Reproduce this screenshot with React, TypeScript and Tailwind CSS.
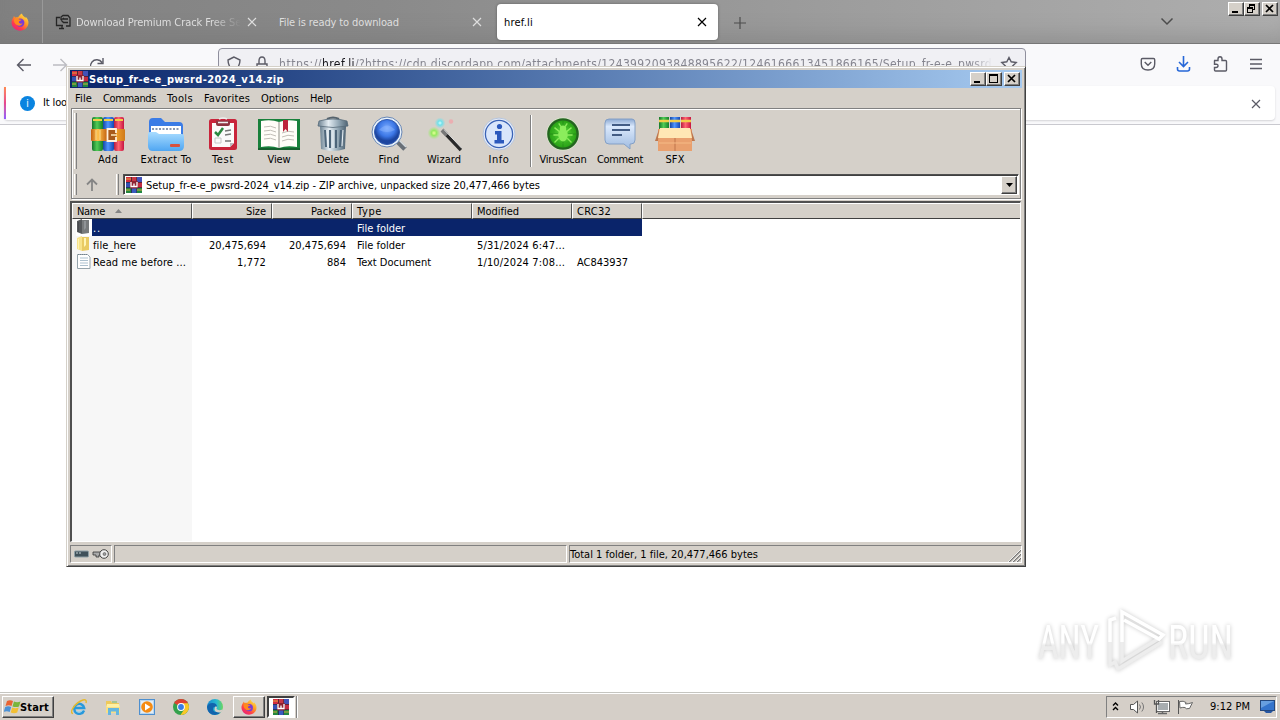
import { useLayoutEffect, useRef, type ReactNode } from "react";

/** Text run spread to an exact advance width, as hinted bitmap text is. */
function T({ w, children, className = "", flat }: { w: number; children: string; className?: string; flat?: boolean }) {
  const ref = useRef<HTMLSpanElement>(null);
  useLayoutEffect(() => {
    const el = ref.current;
    if (!el) return;
    el.style.letterSpacing = "0px";
    const natural = el.getBoundingClientRect().width;
    el.style.letterSpacing = `${(w - natural) / children.length}px`;
  }, [w, children]);
  return (
    <span ref={ref} className={`inline-block shrink-0 whitespace-pre ${flat ? "" : "translate-y-px"} ${className}`}>
      {children}
    </span>
  );
}

const raised =
  "border border-t-white border-l-white border-r-[#404040] border-b-[#404040] shadow-[inset_-1px_-1px_0_#808080] bg-[#d5d0c9]";
const sunken = "border border-t-[#808080] border-l-[#808080] border-r-white border-b-white";

function WinButton({ kind, className = "" }: { kind: "min" | "max" | "restore" | "close"; className?: string }) {
  return (
    <button className={`h-[14px] w-4 shrink-0 ${raised} ${className}`}>
      <svg width="14" height="12" viewBox="0 0 14 12" fill="none" stroke="#000" shapeRendering="crispEdges">
        {kind === "min" && <path d="M3 9h6" strokeWidth="2" />}
        {kind === "max" && (
          <>
            <path d="M2.5 1.5h8v8h-8z" />
            <path d="M2 2h9" strokeWidth="2" />
          </>
        )}
        {kind === "restore" && (
          <>
            <path d="M4.5 4V1.5h5v5H8M2.5 4.5h5v5h-5z" />
            <path d="M4 2h6M2 5h6" strokeWidth="2" />
          </>
        )}
        {kind === "close" && <path d="M3 2l7 7M10 2l-7 7" strokeWidth="1.7" shapeRendering="auto" />}
      </svg>
    </button>
  );
}

function RarLogo({ size = 16 }: { size?: number }) {
  return (
    <svg width={size} height={size} viewBox="0 0 16 16" className="shrink-0">
      <rect width="16" height="16" fill="#24202c" />
      <rect x="0" y="0" width="5" height="5" fill="#d32b3f" />
      <rect x="5.7" y="0" width="4.8" height="5" fill="#c73646" />
      <rect x="11" y="0" width="5" height="5" fill="#4252b8" />
      <rect x="0" y="5.6" width="5" height="4.8" fill="#3450b4" />
      <rect x="11" y="5.6" width="5" height="4.8" fill="#c22c42" />
      <rect x="0" y="11" width="5" height="5" fill="#23863d" />
      <rect x="5.7" y="11" width="4.8" height="5" fill="#385bc0" />
      <rect x="11" y="11" width="5" height="5" fill="#218843" />
      <path d="M0 2h5M11 13h5M0 13h4" stroke="#e4b53f" strokeWidth=".9" />
      <rect x="4" y="4" width="8" height="7.500" rx="1" fill="#8d2432" />
      <path d="M5 5v4.500h6V5M8 6.500v3" fill="none" stroke="#fff" strokeWidth="1.300" />
    </svg>
  );
}

function Firefox({ size = 16 }: { size?: number }) {
  return (
    <svg width={size} height={size} viewBox="0 0 20 20" className="shrink-0">
      <defs>
        <linearGradient id="ff" x1=".85" y1=".05" x2=".2" y2=".95">
          <stop offset="0" stopColor="#ffe34a" />
          <stop offset=".4" stopColor="#ff9b24" />
          <stop offset=".75" stopColor="#ff3b4b" />
          <stop offset="1" stopColor="#e5247e" />
        </linearGradient>
      </defs>
      <path
        d="M12.2.5c.4 1.800 1.200 2.500 2.300 3.500.7.5 1.200 1.100 1.500 1.700l.2-1.600c2.100 1.800 3.300 4.300 3.200 7C19.200 16 15 19.600 10 19.600S.6 15.700.6 10.600c0-2.600 1.200-4.600 2.200-5.800L3.200 3.200l1.500 1.900c1-.5 2.200-.6 3.200-.4C8.800 3.200 10.200 1.400 12.200.5z"
        fill="url(#ff)"
      />
      <circle cx="10.300" cy="10.800" r="4.600" fill="#7a3bd6" />
      <path d="M3.600 6.500c2-1.300 4-.8 5.500.7l2.600.3c-.4 1.300-2.500 1.200-3 2.300-.3 1.800 2.200 2.600 4.100 1.600-.9 2.400-3.600 3.400-6 2.200-3-1.500-4-4.200-3.200-7.100z" fill="#ff8a1e" />
    </svg>
  );
}

function AddIcon() {
  return (
    <svg width="36" height="34" viewBox="0 0 36 34">
      <defs>
        <linearGradient id="ag"><stop offset="0" stopColor="#15762b" /><stop offset=".45" stopColor="#52cc56" /><stop offset="1" stopColor="#14802b" /></linearGradient>
        <linearGradient id="ab"><stop offset="0" stopColor="#1547a5" /><stop offset=".45" stopColor="#4e95ff" /><stop offset="1" stopColor="#1548b2" /></linearGradient>
        <linearGradient id="ar"><stop offset="0" stopColor="#b91c42" /><stop offset=".45" stopColor="#ff6571" /><stop offset="1" stopColor="#c61542" /></linearGradient>
        <linearGradient id="ao"><stop offset="0" stopColor="#c4610f" /><stop offset=".2" stopColor="#ffc34e" /><stop offset=".45" stopColor="#c96a15" /><stop offset=".7" stopColor="#f6a42e" /><stop offset="1" stopColor="#cf7a1a" /></linearGradient>
      </defs>
      <rect x="2" y="0" width="11" height="34" rx="2" fill="url(#ag)" />
      <rect x="13" y="0" width="11" height="34" rx="2" fill="url(#ab)" />
      <rect x="24" y="0" width="10" height="34" rx="2" fill="url(#ar)" />
      <path d="M3 3h9M14 3h9M25 3h8" stroke="#f2ce49" strokeWidth="2" />
      <rect x="1" y="12" width="34" height="12" rx="1" fill="url(#ao)" />
      <path d="M6 13v10M10 13v10" stroke="#fff2b0" strokeWidth="1" opacity=".7" />
      <rect x="18" y="12.500" width="8" height="11" fill="#a85a1c" />
      <path d="M26 16v-4h-8.500v12H26v-4" fill="none" stroke="#fff1dc" strokeWidth="1.800" />
      <path d="M21 18h6" stroke="#f8e1b5" strokeWidth="1.600" />
    </svg>
  );
}

function ExtractIcon() {
  return (
    <svg width="38" height="34" viewBox="0 0 38 34">
      <defs>
        <linearGradient id="ex" x2="0" y2="1"><stop offset="0" stopColor="#a9dcff" /><stop offset="1" stopColor="#4fa6f2" /></linearGradient>
      </defs>
      <path d="M2 5q0-4 4-4h8l4 4h14q4 0 4 4v16H2z" fill="#3b7ce6" />
      <path d="M4 9h30v12H4z" fill="#fff" />
      <path d="M5 12h28" stroke="#8797b3" strokeWidth="2" strokeDasharray="2 1.500" />
      <path d="M1 17q0-2 2-2h6l3 2h23q2 0 2 2v10q0 5-5 5H6q-5 0-5-5z" fill="url(#ex)" />
      <rect x="23" y="27" width="10" height="3" rx="1" fill="#d8513f" />
    </svg>
  );
}

function TestIcon() {
  return (
    <svg width="30" height="34" viewBox="0 0 30 34">
      <rect x="1" y="2" width="28" height="31" rx="2.500" fill="#c9243b" />
      <path d="M4 6h22v20l-4 4H4z" fill="#fbfafa" />
      <path d="M22 30v-4h4z" fill="#b9b9c0" />
      <path d="M8 3.500h14V7q0 2-2 2H10q-2 0-2-2z" fill="#8e3440" />
      <path d="M10 5.500h10M11 2q4-2 8 0" stroke="#eee" strokeWidth="1.500" fill="none" />
      <path d="M7 15l3 3 5-7" fill="none" stroke="#2c8740" strokeWidth="2.500" />
      <path d="M17 14l6-1M17 18l6-1M17 24h6" stroke="#777" strokeWidth="1.300" />
      <path d="M7 21h6v5H7z" fill="none" stroke="#c6c6c6" />
    </svg>
  );
}

function ViewIcon() {
  return (
    <svg width="44" height="34" viewBox="0 0 44 34">
      <path d="M1 2h42v31H1z" fill="#18803b" />
      <path d="M4 4q10-2 18 1 8-3 18-1v26q-10-2-18 1-8-3-18-1z" fill="#fffdf8" />
      <path d="M22 5v26" stroke="#b5b3ad" strokeWidth="1.500" />
      <path d="M7 10q7-2 12 1M7 14q7-2 12 1M7 18q7-2 12 1M7 22q7-2 12 1M25 16q6-3 12-1M25 20q6-3 12-1M25 24q6-3 12-1" stroke="#c2beb7" fill="none" />
      <path d="M26 3h5v12l-2.500-3L26 15z" fill="#bd243a" />
      <path d="M1 32h42" stroke="#155f2d" strokeWidth="2" />
    </svg>
  );
}

function DeleteIcon() {
  return (
    <svg width="32" height="36" viewBox="0 0 32 36">
      <defs>
        <linearGradient id="dl"><stop offset="0" stopColor="#6b8191" /><stop offset=".35" stopColor="#e4edf3" /><stop offset=".7" stopColor="#90a5b3" /><stop offset="1" stopColor="#4e6272" /></linearGradient>
      </defs>
      <path d="M10 3q6-3 12 0" stroke="#56636d" strokeWidth="2" fill="none" />
      <path d="M3 10h26l-1 23q-12 4-24 0z" fill="url(#dl)" />
      <path d="M8 14l1 17M13 14v18M19 14v18M24 14l-1 17" stroke="#4d657a" strokeWidth="2" />
      <path d="M10 14l1 17M16 14v18M26 14l-1 16" stroke="#edf4fa" />
      <path d="M2 5q14-4 28 0l1 5q-15 3-30 0z" fill="url(#dl)" stroke="#566978" strokeWidth=".8" />
    </svg>
  );
}

function FindIcon() {
  return (
    <svg width="36" height="36" viewBox="0 0 36 36">
      <defs>
        <radialGradient id="fi" cy=".35"><stop offset="0" stopColor="#7cadff" /><stop offset=".65" stopColor="#3c77e6" /><stop offset="1" stopColor="#1c459f" /></radialGradient>
      </defs>
      <path d="M26 25l8 8" stroke="#686f77" strokeWidth="5" />
      <path d="M27 23l8 8" stroke="#d4dadd" strokeWidth="1.500" />
      <circle cx="16" cy="16" r="15" fill="#e9f2fb" stroke="#6886b4" />
      <circle cx="16" cy="16" r="12.500" fill="url(#fi)" stroke="#315aae" />
      <path d="M8 14q8-9 16 0-8 4-16 0" fill="#91b9ff" opacity=".45" />
    </svg>
  );
}

function WizardIcon() {
  return (
    <svg width="36" height="36" viewBox="0 0 36 36">
      <defs>
        <radialGradient id="wg"><stop offset="0" stopColor="#eaff9b" /><stop offset=".4" stopColor="#95ea60" /><stop offset="1" stopColor="#a8e880" stopOpacity="0" /></radialGradient>
        <radialGradient id="wb"><stop offset="0" stopColor="#d0ffff" /><stop offset=".4" stopColor="#70e0ea" /><stop offset="1" stopColor="#80e0e8" stopOpacity="0" /></radialGradient>
      </defs>
      <circle cx="8" cy="17" r="6.500" fill="url(#wg)" />
      <circle cx="14" cy="7" r="5.500" fill="url(#wb)" />
      <circle cx="25" cy="5.500" r="2.200" fill="#f3a0a6" opacity=".7" />
      <path d="M17 15l18 19" stroke="#292929" strokeWidth="3.600" />
      <path d="M16 14l5 5" stroke="#777" strokeWidth="4" />
      <path d="M18 13.500l18 19" stroke="#dedede" strokeWidth="1" />
    </svg>
  );
}

function InfoIcon() {
  return (
    <svg width="34" height="34" viewBox="0 0 34 34">
      <circle cx="17" cy="17" r="16" fill="#e7edf8" stroke="#b5c5de" />
      <circle cx="17" cy="17" r="13.600" fill="#d9e6fb" stroke="#3a63b6" strokeWidth="1.300" />
      <circle cx="17.500" cy="9.500" r="2.600" fill="#2b59bd" />
      <path d="M13 14h6.500v9h2.500v3.500H12.500V23H15v-5.500h-2z" fill="#2b59bd" />
    </svg>
  );
}

function VirusIcon() {
  return (
    <svg width="34" height="34" viewBox="0 0 32 32">
      <defs>
        <radialGradient id="vi"><stop offset="0" stopColor="#5fdc3d" /><stop offset="1" stopColor="#239c12" /></radialGradient>
      </defs>
      <circle cx="16" cy="16" r="15.500" fill="#dceacd" />
      <circle cx="16" cy="16" r="13.800" fill="url(#vi)" stroke="#256421" strokeWidth="2.200" />
      <path d="M16 3v26M3 16h26" stroke="#238819" strokeWidth=".7" />
      <circle cx="16" cy="16" r="9" stroke="#35a820" strokeWidth=".7" fill="none" />
      <ellipse cx="16" cy="17" rx="4.500" ry="6" fill="#8bed5c" />
      <circle cx="16" cy="11" r="3" fill="#8bed5c" />
      <path d="M13 14L8 10M12 17H7m5 3l-4 4m11-10l5-4m-4 7h5m-5 3l4 4M14 9l-2-3m6 3l2-3" stroke="#8bed5c" strokeWidth="1.300" />
    </svg>
  );
}

function CommentIcon() {
  return (
    <svg width="34" height="32" viewBox="0 0 34 32">
      <defs>
        <linearGradient id="cm" x2="0" y2="1"><stop offset="0" stopColor="#8ca9d2" /><stop offset=".25" stopColor="#dbe9fc" /><stop offset="1" stopColor="#9fbbe0" /></linearGradient>
      </defs>
      <path d="M6 1h23q3 0 3 4v17q0 4-4 4h-1v5l-6-5H6q-4 0-4-4V5q0-4 4-4z" fill="url(#cm)" stroke="#84a0c6" />
      <path d="M9 7h18M9 12h18M9 17h10" stroke="#435c84" strokeWidth="1.800" />
    </svg>
  );
}

function SfxIcon() {
  return (
    <svg width="40" height="34" viewBox="0 0 40 34">
      <rect x="4" y="0" width="10" height="15" fill="url(#ag)" />
      <rect x="15" y="0" width="10" height="15" fill="url(#ab)" />
      <rect x="26" y="0" width="10" height="15" fill="url(#ar)" />
      <path d="M4 4h10M15 4h10M26 4h10" stroke="#f2ce49" strokeWidth="2.500" />
      <path d="M3 12h34v22H3z" fill="#e9a06e" />
      <path d="M4 12L0 24h3zM36 12l4 12h-3z" fill="#bd774d" />
      <path d="M5 11h30l2 10H3z" fill="#ffe7b4" />
      <path d="M20 21v13" stroke="#bf744b" />
      <path d="M4 26h32" stroke="#f6bb86" />
    </svg>
  );
}

const tools: { label: string; w: number; icon: ReactNode; gap: string }[] = [
  { label: "Add", w: 20, icon: <AddIcon />, gap: "ml-0" },
  { label: "Extract To", w: 51, icon: <ExtractIcon />, gap: "ml-1" },
  { label: "Test", w: 22, icon: <TestIcon />, gap: "ml-[3px]" },
  { label: "View", w: 23, icon: <ViewIcon />, gap: "ml-[2px]" },
  { label: "Delete", w: 32, icon: <DeleteIcon />, gap: "ml-0" },
  { label: "Find", w: 21, icon: <FindIcon />, gap: "ml-[2px]" },
  { label: "Wizard", w: 34, icon: <WizardIcon />, gap: "ml-px" },
  { label: "Info", w: 21, icon: <InfoIcon />, gap: "ml-px" },
];
const tools2: typeof tools = [
  { label: "VirusScan", w: 47, icon: <VirusIcon />, gap: "ml-[4px]" },
  { label: "Comment", w: 46, icon: <CommentIcon />, gap: "ml-[3px]" },
  { label: "SFX", w: 19, icon: <SfxIcon />, gap: "ml-px" },
];

function Tool({ label, w, icon, gap }: (typeof tools)[number]) {
  return (
    <div className={`flex w-[54px] shrink-0 flex-col items-center ${gap}`}>
      <div className="flex h-9 items-center justify-center">{icon}</div>
      <T flat w={w} className="leading-4">{label}</T>
    </div>
  );
}

function Grip({ className }: { className: string }) {
  return <div className={`w-[3px] shrink-0 border-l border-r border-l-white border-r-[#808080] ${className}`} />;
}

function X({ className }: { className: string }) {
  return (
    <svg width="10" height="10" viewBox="0 0 10 10" fill="none" stroke="currentColor" strokeWidth="1.200" className={`shrink-0 ${className}`}>
      <path d="M1 1l8 8M9 1L1 9" />
    </svg>
  );
}

function Browser() {
  return (
    <div className="flex h-[692px] flex-col bg-white">
      <div className="flex h-11 shrink-0 border-b border-[#777] bg-[linear-gradient(90deg,#818181,#8a8a8a_30%,#9b9b9b_62%,#aeaeae)] shadow-[inset_0_-20px_20px_-12px_rgba(110,110,110,0.35)]">
        <div className="flex w-[43px] items-center border-r border-[#999] pl-[11px]">
          <Firefox size={18} />
        </div>
        <div className="flex w-[222px] items-center pl-3 text-[#dedede]">
          <svg width="16" height="16" viewBox="0 0 16 16" fill="none" stroke="#262626" strokeWidth="1.300" className="shrink-0">
            <path d="M5 3.500H1.500v8H8M4 14.500h5M7 12v2" />
            <path d="M6 6V3l2-1.500h5L15 4v8h-4M6 6l2.500 2.500H13M8 5h5M6 6l3-2" />
          </svg>
          <div className="ml-[5px] w-[165px] overflow-hidden [mask-image:linear-gradient(90deg,#000_82%,transparent)]">
            <T w={169}>Download Premium Crack Free Set</T>
          </div>
          <X className="ml-[6px]" />
        </div>
        <div className="flex w-[232px] items-center pl-[14px] text-[#dedede]">
          <T w={120}>File is ready to download</T>
          <X className="ml-[73px]" />
        </div>
        <div className="mt-1 flex h-9 w-[221px] items-center rounded-[4px] bg-white pl-[7px] shadow-[0_0_3px_rgba(0,0,0,0.35)]">
          <T w={29}>href.li</T>
          <X className="ml-[164px] text-black" />
        </div>
        <svg width="14" height="14" viewBox="0 0 14 14" stroke="#4d4d4d" strokeWidth="1.200" className="mt-4 ml-[15px]">
          <path d="M7 1v12M1 7h12" />
        </svg>
        <svg width="14" height="9" viewBox="0 0 14 9" stroke="#4c4c4c" strokeWidth="1.500" fill="none" className="mt-[17px] ml-[413px]">
          <path d="M1.500 1.500L7 7l5.500-5.500" />
        </svg>
        <div className="mt-[2px] ml-[54px] flex">
          <WinButton kind="min" />
          <WinButton kind="restore" />
          <WinButton kind="close" className="ml-[2px]" />
        </div>
      </div>
      <div className="flex h-[42px] shrink-0 bg-[#f9f9fb] text-[#5b5b66]">
        <svg width="90" height="20" viewBox="0 0 90 20" fill="none" stroke="currentColor" strokeWidth="1.400" className="mt-[11px] ml-4">
          <path d="M1.500 10H15M7.500 4l-6 6 6 6" />
          <path d="M37 10h13M44.500 4l6 6-6 6" stroke="#bcbcc2" />
          <path d="M86 7.500A6.300 6.300 0 1 0 87 12M87 3v5.500h-5.500" />
        </svg>
        <div className="mt-1 ml-28 flex h-8 w-[808px] rounded-[4px] border border-[#8f8f9d] bg-[#f0f0f4] pt-[7px] pl-2">
          <svg width="42" height="16" viewBox="0 0 42 16" fill="none" stroke="currentColor" strokeWidth="1.400" className="shrink-0">
            <path d="M7 1L1 4q0 7 6 11 6-4 6-11z" />
            <path d="M30 8h10v7H30zM32 8V5q0-4 3-4t3 4v3" />
          </svg>
          <div className="ml-[10px] flex w-[713px] overflow-hidden text-[12px] leading-4 text-[#85858f] [mask-image:linear-gradient(90deg,#000_97%,transparent)]">
            <T flat w={43}>https://</T>
            <T flat w={33} className="text-[#15141a]">href.li</T>
            <T flat w={637}>/?https://cdn.discordapp.com/attachments/1243992093848895622/1246166613451866165/Setup_fr-e-e_pwsrd</T>
          </div>
          <svg width="18" height="18" viewBox="0 0 18 18" fill="none" stroke="currentColor" strokeWidth="1.400" className="ml-2 shrink-0">
            <path d="M9 1.500l2.200 4.300 5 .7-3.600 3.500.8 5L9 12.600 4.600 15l.8-5L1.800 6.500l5-.7z" />
          </svg>
        </div>
        <svg width="124" height="18" viewBox="0 0 124 18" fill="none" stroke="currentColor" strokeWidth="1.400" className="mt-[11px] ml-[114px]">
          <path d="M2.500 3.500h11q1.200 0 1.200 1.200V9q0 6-6.700 6T1.300 9V4.700q0-1.200 1.200-1.200zM4.700 7L8 10.200 11.300 7" />
          <path d="M43.500 1v10M39 7l4.500 4.500L48 7M37.500 12v2q0 2 2 2h8q2 0 2-2v-2" stroke="#2667d8" strokeWidth="1.600" />
          <path d="M74 5.500h4V4q0-2.300 2-2.300T82 4v1.500h3.500q1 0 1 1V15q0 1-1 1h-10q-1 0-1-1v-2.500H76q2 0 2-1.700T76 9.200h-1.500V5.500" />
          <path d="M110 4.500h12M110 9h12M110 13.500h12" />
        </svg>
      </div>
      <div className="flex h-[39px] shrink-0 border-b border-[#c9c9cf] bg-[#f9f9fb]">
        <div className="ml-1 flex h-[34px] w-[1271px] items-center rounded-[4px] bg-white shadow-[0_1px_2px_rgba(60,60,70,0.2)]">
          <div className="h-8 w-[2px] bg-linear-to-b from-[#ff8a50] via-[#e8478c] to-[#9059ff]" />
          <div className="mt-px ml-[14px] flex size-[15px] items-center justify-center rounded-full bg-[#0a84e0] text-[10px] text-white">
            i
          </div>
          <div className="ml-2 w-[23px] overflow-hidden">
            <T flat w={24}>It loo</T>
          </div>
          <X className="ml-auto mr-[14px] mt-px text-[#5b5b66]" />
        </div>
      </div>
    </div>
  );
}

const menus: [string, number][] = [
  ["File", 17],
  ["Commands", 53],
  ["Tools", 26],
  ["Favorites", 46],
  ["Options", 38],
  ["Help", 22],
];

function HeaderCell({ children, className }: { children?: ReactNode; className: string }) {
  return (
    <div className={`flex h-4 shrink-0 items-center border-t border-l border-b border-t-white border-l-white border-b-[#404040] bg-[#d5d0c9] ${className}`}>
      {children}
    </div>
  );
}

const divider = "border-r border-r-[#555]";

function FolderIcon({ dim }: { dim?: boolean }) {
  return (
    <svg width="16" height="17" viewBox="0 0 16 17" className="shrink-0">
      <rect width="16" height="17" fill={dim ? "#fff" : "#f7f7f7"} />
      <path d="M1 2l5-2v15l-5-2z" fill={dim ? "#56595c" : "#f7e28a"} />
      <path d="M6 1h7v13l-7 1z" fill={dim ? "#777a7c" : "#e9ca62"} />
      <path d="M8 2h2v7L8 11z" fill={dim ? "#909497" : "#fff4b6"} />
      <path d="M2.500 3v10" stroke={dim ? "#484a50" : "#fff3b0"} />
    </svg>
  );
}

function FileRow({ icon, cells, selected }: { icon: ReactNode; selected?: boolean; cells: [string, number][] }) {
  return (
    <div className={`flex h-[17px] items-center leading-[17px] ${selected ? "w-[570px] bg-[#0a246a] text-white" : ""}`}>
      <div className={`flex h-[17px] w-[120px] shrink-0 items-center ${selected ? "" : "bg-[#f7f7f7]"}`}>
        <div className={`flex h-[17px] shrink-0 items-center pl-1 ${selected ? "bg-[#f7f7f7]" : ""}`}>{icon}</div>
        <T w={cells[0][1]} className="ml-[1px]">{cells[0][0]}</T>
      </div>
      <div className="flex w-20 shrink-0 justify-end pr-[6px]"><T w={cells[1][1]}>{cells[1][0]}</T></div>
      <div className="flex w-20 shrink-0 justify-end pr-[6px]"><T w={cells[2][1]}>{cells[2][0]}</T></div>
      <div className="w-[120px] shrink-0 pl-[5px]"><T w={cells[3][1]}>{cells[3][0]}</T></div>
      <div className="w-[100px] shrink-0 pl-[5px]"><T w={cells[4][1]}>{cells[4][0]}</T></div>
      <div className="w-[70px] shrink-0 pl-[5px]"><T w={cells[5][1]}>{cells[5][0]}</T></div>
    </div>
  );
}

function Archive() {
  return (
    <div className="absolute top-[66px] left-[66px] flex h-[501px] w-[960px] flex-col border border-t-[#d4d0c8] border-l-[#d4d0c8] border-r-[#404040] border-b-[#404040] bg-[#d5d0c9] p-[3px] shadow-[inset_1px_1px_0_#fff,inset_-1px_-1px_0_#808080]">
      <div className="flex h-[18px] shrink-0 items-center bg-linear-to-r from-[#0a246a] to-[#a6caf0] pr-[2px] pl-[2px] text-white">
        <RarLogo />
        <T w={195} className="ml-[1px] font-bold">Setup_fr-e-e_pwsrd-2024_v14.zip</T>
        <div className="ml-auto flex">
          <WinButton kind="min" />
          <WinButton kind="max" />
          <WinButton kind="close" className="ml-[2px]" />
        </div>
      </div>
      <div className="flex h-5 shrink-0 items-center gap-[11px] pl-[5px]">
        {menus.map(([label, w]) => (
          <T key={label} w={w}>{label}</T>
        ))}
      </div>
      <div className="mx-[1px] flex h-[91px] shrink-0 flex-col border border-[#808080] shadow-[inset_1px_1px_0_#fff,1px_1px_0_#fff]">
        <div className="flex h-[62px] shrink-0 pt-1 pl-[2px]">
          <Grip className="h-[56px]" />
          <div className="mt-[3px] ml-[4px] flex">
            {tools.map((t) => (
              <Tool key={t.label} {...t} />
            ))}
            <div className="ml-[4px] -mt-px h-[52px] w-[2px] border-l border-r border-l-[#808080] border-r-white" />
            {tools2.map((t) => (
              <Tool key={t.label} {...t} />
            ))}
          </div>
        </div>
        <div className="flex h-[27px] pt-[3px] pl-[2px]">
          <Grip className="h-[21px]" />
          <svg width="14" height="14" viewBox="0 0 14 14" fill="none" stroke="#858585" strokeWidth="1.800" className="mt-1 ml-[8px]">
            <path d="M7 13V2M2 6.500L7 1.500l5 5" />
          </svg>
          <Grip className="ml-[17px] h-[21px]" />
          <div className="ml-1 flex h-[21px] w-[896px] items-center border border-t-[#505050] border-l-[#505050] border-r-white border-b-white bg-white pr-[1px] pl-[2px] shadow-[inset_1px_1px_0_#404040]">
            <RarLogo />
            <T w={394} className="ml-1">Setup_fr-e-e_pwsrd-2024_v14.zip - ZIP archive, unpacked size 20,477,466 bytes</T>
            <div className={`ml-auto flex h-[18px] w-4 items-center justify-center ${raised}`}>
              <svg width="7" height="4" viewBox="0 0 7 4"><path d="M0 0h7L3.500 4z" fill="#000" /></svg>
            </div>
          </div>
        </div>
      </div>
      <div className="mt-[2px] mr-px flex h-[341px] shrink-0 flex-col border-t-2 border-l-2 border-r border-b border-t-[#505050] border-l-[#505050] border-r-white border-b-white bg-white">
        <div className="flex h-4 shrink-0">
          <HeaderCell className={`w-[120px] gap-[10px] pl-1 ${divider}`}>
            <T w={28}>Name</T>
            <svg width="7" height="4" viewBox="0 0 7 4"><path d="M0 4h7L3.500 0z" fill="#858585" /></svg>
          </HeaderCell>
          <HeaderCell className={`w-20 justify-end pr-[5px] ${divider}`}><T w={20}>Size</T></HeaderCell>
          <HeaderCell className={`w-20 justify-end pr-[5px] ${divider}`}><T w={35}>Packed</T></HeaderCell>
          <HeaderCell className={`w-[120px] pl-1 ${divider}`}><T w={25}>Type</T></HeaderCell>
          <HeaderCell className={`w-[100px] pl-1 ${divider}`}><T w={42}>Modified</T></HeaderCell>
          <HeaderCell className={`w-[70px] pl-1 ${divider}`}><T w={34}>CRC32</T></HeaderCell>
          <HeaderCell className="w-[378px]" />
        </div>
        <FileRow
          selected
          icon={<FolderIcon dim />}
          cells={[["..", 8], ["", 0], ["", 0], ["File folder", 48], ["", 0], ["", 0]]}
        />
        <FileRow
          icon={<FolderIcon />}
          cells={[["file_here", 43], ["20,475,694", 57], ["20,475,694", 57], ["File folder", 48], ["5/31/2024 6:47...", 88], ["", 0]]}
        />
        <FileRow
          icon={
            <svg width="16" height="16" viewBox="0 0 16 16" className="-mt-[2px] shrink-0">
              <path d="M1.500 1.500h10l2.500 2.500v11.500H1.500z" fill="#fff" stroke="#96a4ac" />
              <path d="M4 5h8M4 7.500h8M4 10h8M4 12.500h8" stroke="#adc1cf" />
              <path d="M2 1.500h9" stroke="#75818a" strokeDasharray="1 1" />
            </svg>
          }
          cells={[["Read me before ...", 93], ["1,772", 29], ["884", 19], ["Text Document", 74], ["1/10/2024 7:08...", 88], ["AC843937", 51]]}
        />
        <div className="w-[120px] flex-1 bg-[#f7f7f7]" />
      </div>
      <div className="mt-[3px] flex h-[18px] shrink-0 gap-[2px]">
        <div className={`flex w-[42px] items-center pl-[3px] ${sunken}`}>
          <svg width="36" height="12" viewBox="0 0 36 12">
            <rect x=".5" y="3" width="14" height="6" rx="1" fill="#40515a" stroke="#8fa0a7" />
            <path d="M2 5h2M5 5h2" stroke="#c6d4d6" />
            <path d="M19 4h9v3h-3v2h-3V7h-3z" fill="#aaa" stroke="#333" strokeWidth=".8" />
            <circle cx="30" cy="6" r="4.300" fill="#f0f0f0" stroke="#444" />
            <circle cx="30.500" cy="6" r="1.500" fill="#999" stroke="#444" strokeWidth=".5" />
          </svg>
        </div>
        <div className={`w-[453px] ${sunken}`} />
        <div className={`flex flex-1 items-center ${sunken}`}>
          <T w={188}>Total 1 folder, 1 file, 20,477,466 bytes</T>
          <svg width="13" height="13" viewBox="0 0 13 13" className="mt-[3px] ml-auto">
            <path d="M1 13L13 1M5 13l8-8M9 13l4-4" stroke="#777" strokeWidth="1.300" />
            <path d="M0 13L13 0M4 13l9-9M8 13l5-5" stroke="#fff" strokeWidth=".8" />
          </svg>
        </div>
      </div>
    </div>
  );
}

function Taskbar() {
  return (
    <div className="flex h-7 border-t border-[#c5c5c0] bg-[#d5cfc8] pl-[2px] shadow-[inset_0_1px_0_#fff]">
      <button className={`mt-[3px] flex h-[22px] w-[52px] items-center pl-[1px] ${raised}`}>
        <svg width="17" height="16" viewBox="0 0 17 16" className="shrink-0">
          <path d="M3 2q3-1.500 6 0L7.500 7Q5 5.500 1.500 7z" fill="#e96332" />
          <path d="M10 2.500q3 1.500 6.500 0L15 7.500q-3 1.200-6.500 0z" fill="#79b53b" />
          <path d="M1.200 8q3-1.500 6 0l-1.500 5q-3-1.500-6 0z" fill="#4c91d5" />
          <path d="M8.200 8.500q3 1.500 6.500 0l-1.500 5q-3 1.500-6.500 0z" fill="#f2bf34" />
        </svg>
        <T w={29} className="-ml-px font-bold">Start</T>
      </button>
      <div className="mt-[6px] ml-[17px] flex gap-[18px]">
        <svg width="16" height="16" viewBox="0 0 16 16" fill="none">
          <path d="M13 11.500A5 5 0 1 1 13.200 9H4" stroke="#2799dc" strokeWidth="2.400" />
          <path d="M12 10.500A4.500 4.500 0 0 1 5 12" stroke="#82d1f7" />
          <path d="M2 14.500Q-1 14 2 9 6 3 12 1q4-1 3 3" stroke="#e6b92c" strokeWidth="1.400" />
        </svg>
        <svg width="16" height="16" viewBox="0 0 16 16">
          <path d="M1 2h5l1 2h7v10H1z" fill="#eec95c" />
          <path d="M2 5h12l1 4H1z" fill="#fff0a3" />
          <path d="M1 8h14v6H1z" fill="#f7df87" />
          <path d="M3 16V9h11v7h-3v-3.500H6V16z" fill="#65b6e0" />
          <path d="M7 3h5" stroke="#78bb60" />
        </svg>
        <svg width="16" height="16" viewBox="0 0 16 16">
          <rect x=".5" y=".5" width="15" height="15" fill="#b9d6ee" stroke="#4d8fcf" />
          <rect x="2" y="2" width="12" height="12" fill="#e3edf5" />
          <circle cx="8" cy="8" r="5.800" fill="#f58b12" />
          <path d="M6 4.500v7L11.500 8z" fill="#fff" />
        </svg>
        <svg width="16" height="16" viewBox="0 0 16 16">
          <circle cx="8" cy="8" r="8" fill="#34a14c" />
          <path d="M8 8L1.100 4A8 8 0 0 1 14.900 4z" fill="#dd4133" />
          <path d="M8 4.300h7A8 8 0 0 1 7.500 16l4-6z" fill="#fbc827" />
          <circle cx="8" cy="8" r="3.900" fill="#fff" />
          <circle cx="8" cy="8" r="2.900" fill="#397ee6" />
        </svg>
        <svg width="16" height="16" viewBox="0 0 16 16">
          <defs>
            <linearGradient id="eg"><stop offset="0" stopColor="#1688cf" /><stop offset=".6" stopColor="#29b9d0" /><stop offset="1" stopColor="#6cd75d" /></linearGradient>
          </defs>
          <circle cx="8" cy="8" r="8" fill="url(#eg)" />
          <path d="M0 8q1-4 5.500-4T10 8q-4-1-4 2 0 4 8 3-2.500 3-6 3-7 0-8-8z" fill="#1264ad" />
          <path d="M9 7q1.500 1 .5 3 2 2 6 .5l.5.5-2 2.500q-6 .5-6.500-3Q7.500 8 9 7z" fill="#d5cfc8" />
        </svg>
      </div>
      <div className={`mt-[3px] ml-[10px] flex h-[22px] w-8 items-center justify-center ${raised}`}>
        <Firefox size={16} />
      </div>
      <div className="mt-[3px] ml-[2px] flex h-[22px] w-7 items-center border-2 border-t-[#404040] border-l-[#404040] border-r-white border-b-white bg-white pl-1">
        <RarLogo />
      </div>
      <div className="mt-[3px] ml-[1px] h-[22px] w-[2px] border-l border-r border-l-[#808080] border-r-white" />
      <div className={`mt-[3px] ml-auto mr-[3px] flex h-[22px] w-[171px] items-center ${sunken}`}>
        <svg width="86" height="16" viewBox="0 0 86 16" className="ml-[5px] shrink-0" fill="none">
          <path d="M1 6.500L3.500 4 6 6.500M1 11L3.500 8.500 6 11" stroke="#000" strokeWidth="1.400" />
          <path d="M18.500 5.500h3l4-3.500v12l-4-3.500h-3z" fill="#fff" stroke="#555" />
          <path d="M27.500 5.500q2 2.500 0 5M29.800 3.500q3.500 4.500 0 9" stroke="#777" />
          <rect x="45.500" y="3.500" width="11" height="8" fill="#a8adb0" stroke="#fff" />
          <rect x="44.500" y="2.500" width="13" height="10" stroke="#666" />
          <path d="M46 14.500h9M50.500 13v1" stroke="#666" strokeWidth="1.500" />
          <path d="M42.500 1v4h4V1M44.500 5v9" stroke="#555" strokeWidth="1.300" />
          <path d="M67.500 2.500q4-1 6.500 1l-.5 1.500q3 0 7-1.500l-3 6q-4 1-4.500-1-2-.5-5 .5z" fill="#fff" stroke="#666" />
          <path d="M66.500 1v14" stroke="#555" />
        </svg>
        <T w={40} flat className="ml-[12px]">9:12 PM</T>
        <svg width="16" height="14" viewBox="0 0 16 14" className="ml-[10px] shrink-0">
          <rect x=".5" y=".5" width="14" height="10" fill="#3474cc" stroke="#23487f" />
          <path d="M1 1h13L1 8z" fill="#679fe0" />
          <path d="M4 11h9l-2 2H6z" fill="#2556a3" />
        </svg>
      </div>
    </div>
  );
}

function Watermark() {
  return (
    <svg width="240" height="76" viewBox="0 0 240 76" className="pointer-events-none absolute top-[604px] left-[1031px] [filter:drop-shadow(0_0_2px_rgba(0,0,0,0.22))]">
      <defs>
        <linearGradient id="wm" x2="0" y2="1"><stop offset=".5" stopColor="#fff" /><stop offset=".55" stopColor="#ededed" /></linearGradient>
      </defs>
      <g fill="url(#wm)" fontSize="49" className="font-['Roboto',sans-serif] font-normal">
        <text x="7" y="55" textLength="61" lengthAdjust="spacingAndGlyphs">ANY</text>
        <text x="137" y="55" textLength="65" lengthAdjust="spacingAndGlyphs">RUN</text>
      </g>
      <path d="M79 38v23l5-3 3 7 44-27" fill="none" stroke="#ededed" strokeWidth="3.500" />
      <path d="M91 38v19l36-22" fill="none" stroke="#ededed" strokeWidth="3.500" />
      <g fill="none" stroke="#fff" strokeWidth="3.500">
        <path d="M91 38V8l41 23-4 4-35-19" />
        <path d="M85 14l-6 2v22" />
      </g>
    </svg>
  );
}

export default function App() {
  return (
    <div className="relative h-[720px] w-[1280px] cursor-default overflow-hidden bg-white font-['DejaVu_Sans_Condensed','DejaVu_Sans',sans-serif] text-[11px] leading-[14px] text-black [font-stretch:condensed]">
      <Browser />
      <Taskbar />
      <Archive />
      <Watermark />
    </div>
  );
}
